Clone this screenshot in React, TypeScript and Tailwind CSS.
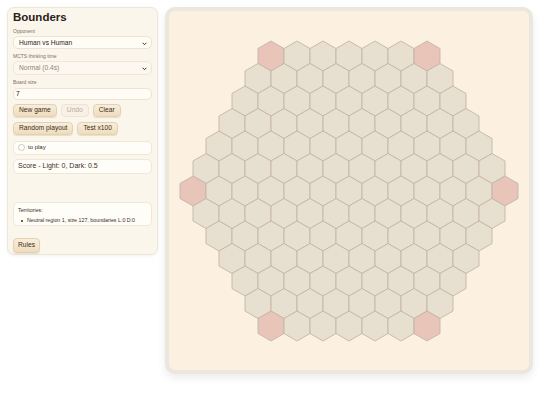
import React from "react";

const R = 15;
const W = 26;

function Hexes() {
  const cells: { x: number; y: number; pink: boolean }[] = [];
  const cx = 170;
  const cy = 151;
  const pinks = new Set(["0,-6", "6,-6", "-6,0", "6,0", "-6,6", "0,6"]);
  for (let r = -6; r <= 6; r++) {
    const qMin = Math.max(-6, -6 - r);
    const qMax = Math.min(6, 6 - r);
    for (let q = qMin; q <= qMax; q++) {
      cells.push({ x: cx + W * (q + r / 2), y: cy + 22.5 * r, pink: pinks.has(`${q},${r}`) });
    }
  }
  const pts = (x: number, y: number) =>
    [
      [x, y - R],
      [x + 13, y - 7.5],
      [x + 13, y + 7.5],
      [x, y + R],
      [x - 13, y + 7.5],
      [x - 13, y - 7.5],
    ]
      .map((p) => p.join(","))
      .join(" ");
  return (
    <svg width={340} height={302} viewBox="0 0 340 302">
      {cells.map((c, i) => (
        <polygon
          key={i}
          points={pts(c.x, c.y)}
          fill={c.pink ? "#e8c4b9" : "#e7dfcf"}
          stroke="#c4b6a9"
          strokeWidth={0.9}
        />
      ))}
    </svg>
  );
}

function Chevron() {
  return (
    <svg width="5" height="4" viewBox="0 0 5 4" className="absolute right-[4px] top-[5px]">
      <path d="M0.7 0.8 L2.5 2.7 L4.3 0.8" fill="none" stroke="#3a2f25" strokeWidth="1" />
    </svg>
  );
}

const btn =
  "h-[13px] px-[5px] rounded-[4px] border border-[#e3d1b1] bg-gradient-to-b from-[#f9eedb] to-[#efdcbd] text-[6.67px] leading-none text-[#3a2e22] shadow-[0_1px_1px_rgba(120,90,40,0.15)]";

export default function App() {
  return (
    <div
      className="w-[540px] h-[405px] bg-white flex items-start gap-[7px] p-[7px] box-border"
      style={{ fontFamily: '"Liberation Sans", Arial, sans-serif' }}
    >
      <div className="w-[151px] h-[248px] box-border rounded-[7px] border border-[#eee7d9] bg-[#faf6ec] shadow-[0_1px_3px_rgba(0,0,0,0.06)] px-[5px] pt-[2px] flex flex-col text-[#3a2e22]">
        <div className="text-[11.5px] leading-[14px] font-bold text-[#2b2117]">Bounders</div>
        <div className="mt-[4px] text-[5px] leading-[6px] text-[#7d7164]">Opponent</div>
        <div className="relative mt-[2px] h-[14px] rounded-[5px] border border-[#ece3d3] bg-[#fffcf5] flex items-center pl-[5px] text-[6.67px] text-[#2e241a]">
          Human vs Human
          <Chevron />
        </div>
        <div className="mt-[4px] text-[5px] leading-[6px] text-[#7d7164]">MCTS thinking time</div>
        <div className="relative mt-[2px] h-[14px] rounded-[5px] border border-[#efe8da] bg-[#fcf8ef] flex items-center pl-[5px] text-[6.67px] text-[#8f8477]">
          Normal (0.4s)
          <Chevron />
        </div>
        <div className="mt-[4px] text-[5px] leading-[6px] text-[#7d7164]">Board size</div>
        <div className="mt-[3px] h-[13px] rounded-[5px] border border-[#ece3d3] bg-[#fffcf5] flex items-center pl-[2px] text-[6.67px] text-[#2e241a]">
          7
        </div>
        <div className="mt-[4px] flex gap-[4px]">
          <button className={btn}>New game</button>
          <button className="h-[13px] px-[5px] rounded-[4px] border border-[#eee4d3] bg-[#f8f1e4] text-[6.67px] leading-none text-[#b9ad9e]">
            Undo
          </button>
          <button className={btn}>Clear</button>
        </div>
        <div className="mt-[5px] flex gap-[4px]">
          <button className={btn}>Random playout</button>
          <button className={btn}>Test x100</button>
        </div>
        <div className="mt-[6px] h-[15px] rounded-[5px] border border-[#efe8da] bg-[#fffdf8] flex items-center pl-[4px] gap-[3px] text-[6px] text-[#3a2e22]">
          <span className="w-[7px] h-[7px] rounded-full border border-[#cfc6ba] bg-white" />
          to play
        </div>
        <div className="mt-[4px] h-[16px] rounded-[5px] border border-[#efe8da] bg-[#fffdf8] flex items-center pl-[4px] text-[7px] text-[#3a2e22]">
          <span className="text-[#3a2e22]">Score - Light: 0, Dark: 0.5</span>
        </div>
        <div className="mt-[28px] h-[25px] rounded-[5px] border border-[#efe8da] bg-[#fffdf8] pl-[4px] pt-[4px] text-[5.3px] leading-[7px] text-[#3a2e22] box-border">
          <div>Territories:</div>
          <div className="flex items-center mt-[3px] pl-[3px]">
            <span className="w-[2px] h-[2px] rounded-full bg-[#3a2e22] mr-[4px]" />
            Neutral region 1, size 127, boundaries L:0 D:0
          </div>
        </div>
        <div className="mt-[4px]">
          <button className="h-[15px] px-[4px] rounded-[4px] border border-[#e3d1b1] bg-gradient-to-b from-[#f9eedb] to-[#efdcbd] text-[6.67px] leading-none text-[#3a2e22] shadow-[0_1px_1px_rgba(120,90,40,0.15)]">
            Rules
          </button>
        </div>
      </div>
      <div className="w-[368px] h-[367px] box-border rounded-[10px] border-4 border-[#ebe7df] bg-[#fcf1e0] shadow-[0_4px_8px_rgba(0,0,0,0.08)] flex items-center justify-center">
        <Hexes />
      </div>
    </div>
  );
}
